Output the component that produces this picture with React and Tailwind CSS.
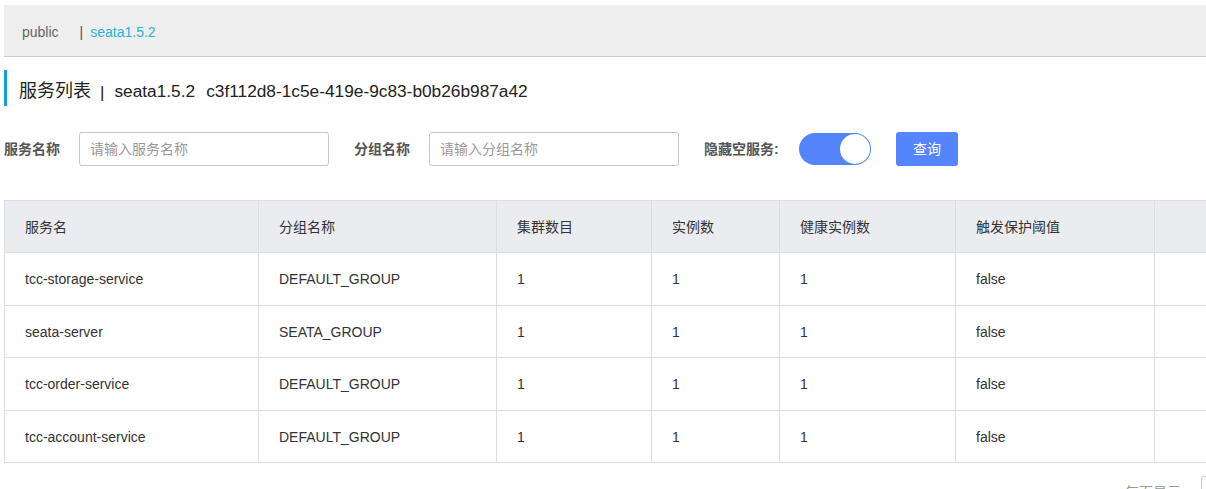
const rows = [
  { name: 'tcc-storage-service', group: 'DEFAULT_GROUP', clusters: 1, instances: 1, healthy: 1, protect: 'false' },
  { name: 'seata-server', group: 'SEATA_GROUP', clusters: 1, instances: 1, healthy: 1, protect: 'false' },
  { name: 'tcc-order-service', group: 'DEFAULT_GROUP', clusters: 1, instances: 1, healthy: 1, protect: 'false' },
  { name: 'tcc-account-service', group: 'DEFAULT_GROUP', clusters: 1, instances: 1, healthy: 1, protect: 'false' },
];

const cols = ['w-[254px]', 'w-[238px]', 'w-[155px]', 'w-[128px]', 'w-[176px]', 'w-[199px]', 'w-[120px]'];

export default function App() {
  return (
    <div className="w-[1206px] h-[489px] overflow-hidden bg-white text-[#333] font-['Liberation_Sans','Noto_Sans_CJK_SC',sans-serif]">
      <div className="pl-1 pt-[5px]">
        <div className="h-[52px] bg-[#eeeeee] border-b border-[#cccccc] flex items-center pl-[18px] pt-1 text-[14px]">
          <span className="text-[#666]">public</span>
          <span className="ml-[21px] text-[#7a3b2e]">|</span>
          <span className="ml-[7px] text-[#2bb3d9]">seata1.5.2</span>
        </div>

        <div className="mt-[13px] h-[36px] border-l-[3px] border-[#0ea0d7] flex items-end pb-[1px] pl-3 text-[18px] text-[#222]">
          <span>服务列表</span>
          <span className="text-[17px] ml-[9px]">|</span>
          <span className="text-[17.3px] ml-[10px]">seata1.5.2</span>
          <span className="text-[17.3px] ml-[11px]">c3f112d8-1c5e-419e-9c83-b0b26b987a42</span>
        </div>
      </div>

      <div className="mt-[26px] ml-1 flex items-center h-[34px] text-[14px]">
        <span className="w-[75px] font-bold text-[#555]">服务名称</span>
        <div className="w-[250px] h-[34px] border border-[#c4c6cf] rounded-[3px] flex items-center px-[10px] text-[#999]">请输入服务名称</div>
        <span className="ml-[25px] w-[75px] font-bold text-[#555]">分组名称</span>
        <div className="w-[250px] h-[34px] border border-[#c4c6cf] rounded-[3px] flex items-center px-[10px] text-[#999]">请输入分组名称</div>
        <span className="ml-[25px] w-[95px] font-bold text-[#555]">隐藏空服务:</span>
        <div className="w-[72px] h-[32px] rounded-full bg-[#5584ff] flex items-center justify-end pr-[1px]">
          <div className="w-[30px] h-[30px] rounded-full bg-white" />
        </div>
        <button className="ml-[25px] w-[62px] h-[34px] rounded-[3px] bg-[#5584ff] text-white text-[14px]">查询</button>
      </div>

      <div className="mt-[34px] ml-1 w-[1300px]">
        <table className="border-collapse table-fixed text-[14px] text-left">
          <thead>
            <tr className="bg-[#ebecf0] h-[52px]">
              {['服务名', '分组名称', '集群数目', '实例数', '健康实例数', '触发保护阈值', ''].map((h, i) => (
                <th key={i} className={`${cols[i]} font-normal px-5 pt-[2px] border border-[#dcdee3]`}>{h}</th>
              ))}
            </tr>
          </thead>
          <tbody>
            {rows.map((r) => (
              <tr key={r.name} className="h-[52.5px]">
                {[r.name, r.group, r.clusters, r.instances, r.healthy, r.protect, ''].map((v, i) => (
                  <td key={i} className="px-5 pt-[2px] border border-[#dcdee3]">{v}</td>
                ))}
              </tr>
            ))}
          </tbody>
        </table>
      </div>

      <div className="mt-[13px] flex items-start justify-end text-[14px] text-[#999]">
        <span className="mt-[6px] mr-[20px]">每页显示</span>
        <div className="w-[40px] h-[28px] border border-[#c4c6cf] rounded-[3px] -mr-[35px]" />
      </div>
    </div>
  );
}
